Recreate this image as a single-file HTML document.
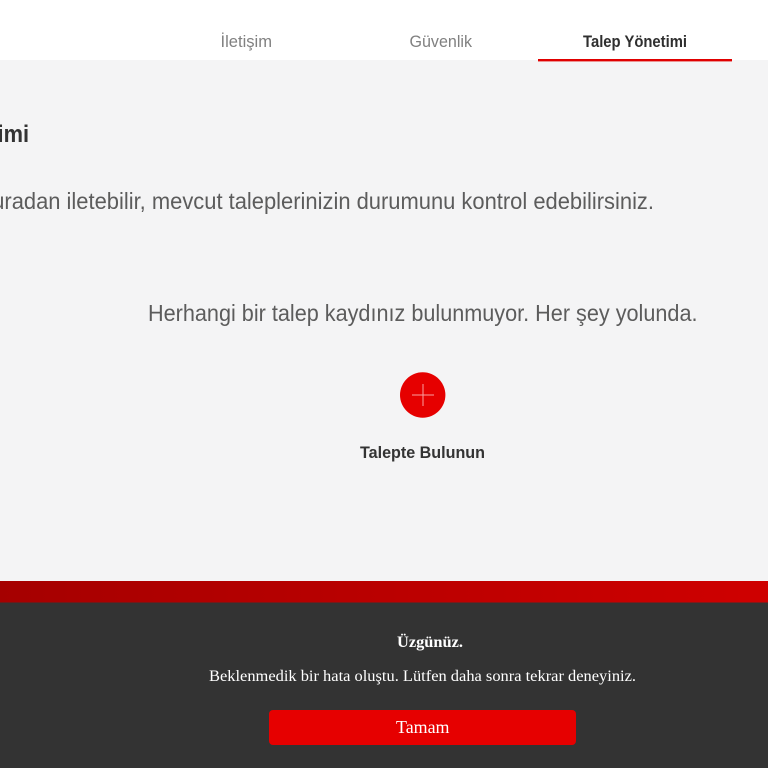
<!DOCTYPE html>
<html lang="tr">
<head>
<meta charset="utf-8">
<title>Talep Yönetimi</title>
<style>
html,body{margin:0;padding:0;width:768px;height:768px;overflow:hidden;background:#f4f4f5}
svg{display:block;position:absolute;left:0;top:0}
.s{font-family:"Liberation Sans",sans-serif}
.r{font-family:"Liberation Serif",serif;fill:#fff}
</style>
</head>
<body>
<svg width="768" height="768" viewBox="0 0 768 768" xmlns="http://www.w3.org/2000/svg">
<defs>
<linearGradient id="g" x1="0" y1="0" x2="1" y2="0">
<stop offset="0" stop-color="#a50000"/>
<stop offset="1" stop-color="#cf0000"/>
</linearGradient>
</defs>
<rect width="768" height="768" fill="#f4f4f5"/>
<rect width="768" height="60" fill="#fff"/>
<text class="s" x="220.500" y="47" font-size="17" fill="#808080" textLength="51.500" lengthAdjust="spacingAndGlyphs">İletişim</text>
<text class="s" x="409.500" y="47" font-size="17" fill="#808080" textLength="62.500" lengthAdjust="spacingAndGlyphs">Güvenlik</text>
<text class="s" x="583" y="47" font-size="17" font-weight="700" fill="#2f2f2f" textLength="104" lengthAdjust="spacingAndGlyphs">Talep Yönetimi</text>
<rect x="538" y="59" width="194" height="2.400" fill="#e00000"/>
<text class="s" x="-124" y="142" font-size="24" font-weight="700" fill="#333" textLength="153" lengthAdjust="spacingAndGlyphs">Talep Yönetimi</text>
<text class="s" x="-20" y="209" font-size="23.500" fill="#5c5c5c" textLength="674" lengthAdjust="spacingAndGlyphs">buradan iletebilir, mevcut taleplerinizin durumunu kontrol edebilirsiniz.</text>
<text class="s" x="148" y="321" font-size="23.500" fill="#5c5c5c" textLength="549.500" lengthAdjust="spacingAndGlyphs">Herhangi bir talep kaydınız bulunmuyor. Her şey yolunda.</text>
<circle cx="422.700" cy="395" r="22.700" fill="#e60000"/>
<path d="M412 395H434M423 384V406" stroke="#f9a0a0" stroke-width="1" fill="none"/>
<text class="s" x="360" y="458" font-size="16.500" font-weight="700" fill="#333" textLength="125" lengthAdjust="spacingAndGlyphs">Talepte Bulunun</text>
<rect y="581" width="768" height="21.500" fill="url(#g)"/>
<rect y="602.500" width="768" height="165.500" fill="#333"/>
<text class="r" x="397" y="647" font-size="16" font-weight="700" textLength="66" lengthAdjust="spacingAndGlyphs">Üzgünüz.</text>
<text class="r" x="209" y="681" font-size="16" textLength="427" lengthAdjust="spacingAndGlyphs">Beklenmedik bir hata oluştu. Lütfen daha sonra tekrar deneyiniz.</text>
<rect x="269" y="710" width="307" height="35" rx="4" fill="#e60000"/>
<text class="r" x="396" y="733" font-size="17.500" textLength="53.500" lengthAdjust="spacingAndGlyphs">Tamam</text>
</svg>
</body>
</html>
